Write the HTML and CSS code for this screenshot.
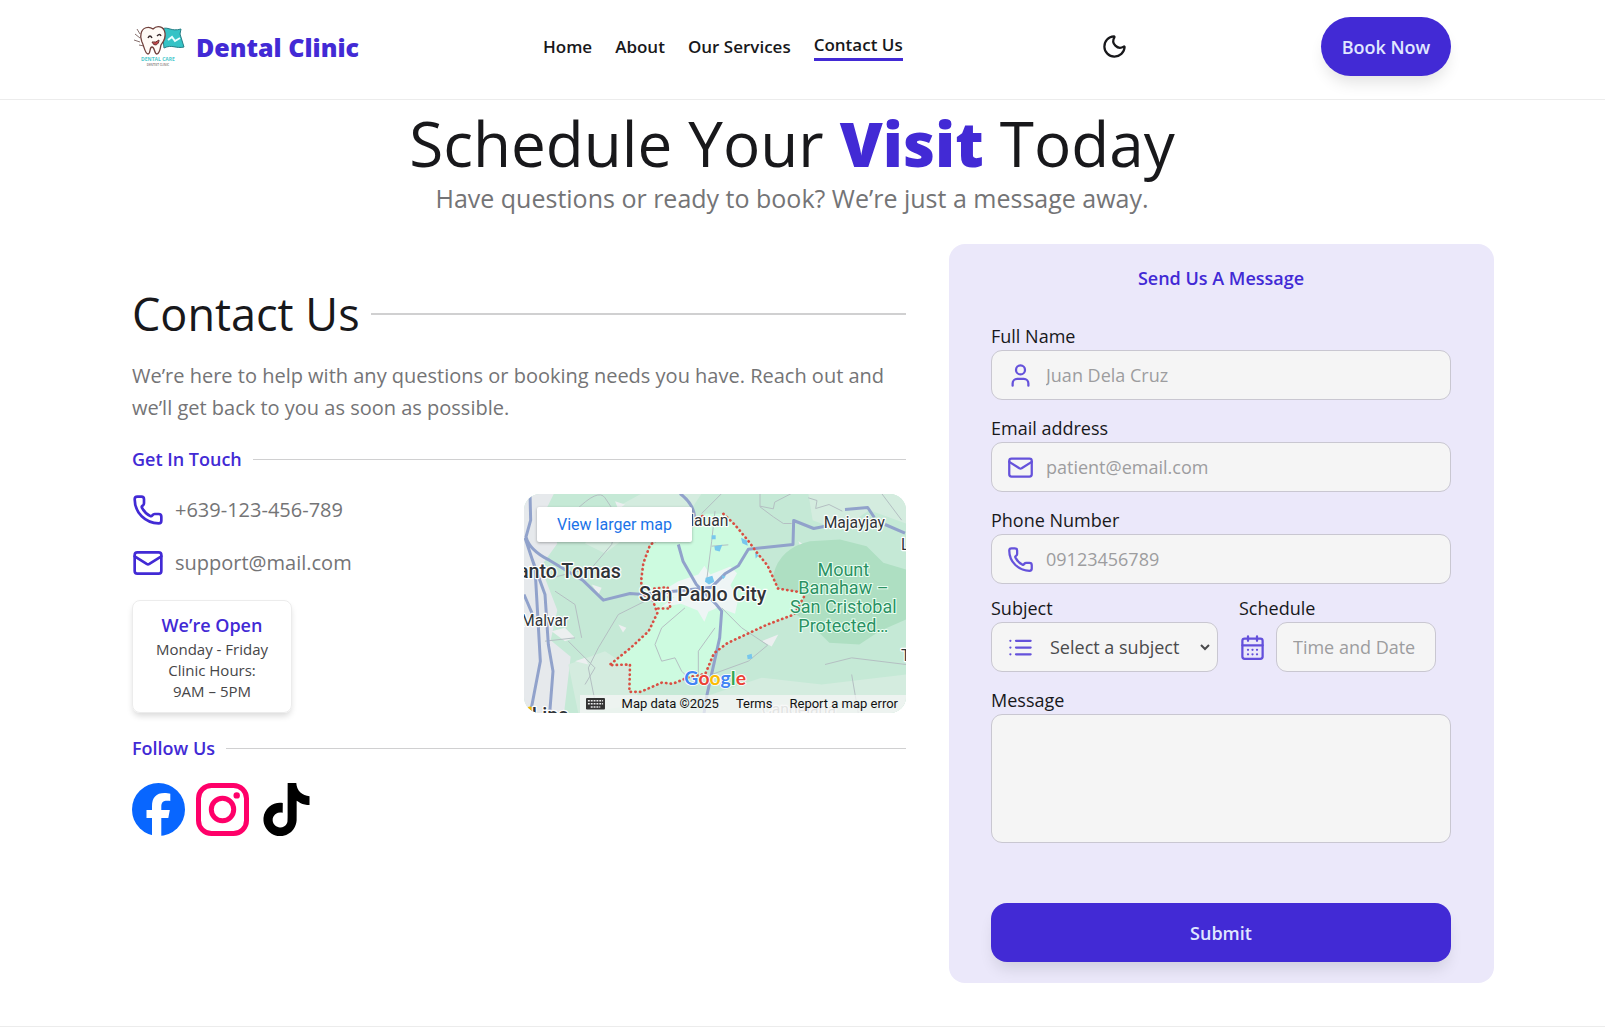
FILE: index.html
```html
<!DOCTYPE html>
<html lang="en">
<head>
<meta charset="utf-8">
<meta name="viewport" content="width=device-width, initial-scale=1">
<title>Dental Clinic – Contact Us</title>
<link rel="stylesheet" href="styles.css">
</head>
<body>
<svg class="sprite" aria-hidden="true">
  <symbol id="phone" viewBox="0 0 24 24"><path d="M13.832 16.568a1 1 0 0 0 1.213-.303l.355-.465A2 2 0 0 1 17 15h3a2 2 0 0 1 2 2v3a2 2 0 0 1-2 2A18 18 0 0 1 2 4a2 2 0 0 1 2-2h3a2 2 0 0 1 2 2v3a2 2 0 0 1-.8 1.600l-.468.351a1 1 0 0 0-.292 1.233 14 14 0 0 0 6.392 6.384"/></symbol>
  <symbol id="mail" viewBox="0 0 24 24"><rect x="2" y="4" width="20" height="16" rx="2"/><path d="m22 7-8.991 5.727a2 2 0 0 1-2.009 0L2 7"/></symbol>
  <symbol id="user" viewBox="0 0 24 24"><path d="M19 21v-2a4 4 0 0 0-4-4H9a4 4 0 0 0-4 4v2"/><circle cx="12" cy="7" r="4"/></symbol>
  <symbol id="list" viewBox="0 0 24 24"><path d="M8 6h13M8 12h13M8 18h13M3 6h.01M3 12h.01M3 18h.01"/></symbol>
  <symbol id="calendar" viewBox="0 0 24 24"><rect x="3" y="4" width="18" height="18" rx="2"/><path d="M8 2v4M16 2v4M3 10h18M8 14h.01M12 14h.01M16 14h.01M8 18h.01M12 18h.01M16 18h.01"/></symbol>
</svg>

<header class="header">
  <a class="brand" href="#">
    <svg class="brand-logo" viewBox="0 0 54 44" aria-hidden="true">
      <path d="M30 4c6-3 9 3 19 0l-1 5 4 13c-8 2-12-3-20 1z" fill="#35c3c6" stroke="#267f86"/>
      <path d="m36 15 4-3 3 4 5-3" fill="none" stroke="#e9ffff" stroke-width="2"/>
      <path d="m5 4 3 5M3 9l5 4M2 15l6 2M7 20l5 1" fill="none" stroke="#86706d"/>
      <path d="M9 9c1-7 8-8 12-5 4-4 11-3 12 4 1 6-2 9-4 12-1 4-1 8-4 9-3 0-2-7-5-7s-1 7-4 7-4-8-6-12c-1-3-2-5-1-8z" fill="#fffaf6" stroke="#71413c" stroke-width="1.300"/>
      <path d="M16 13q2-4 4 0M25 11q3-3 4 0" fill="none" stroke="#38292b" stroke-width="1.400"/>
      <path d="M20 17q4 1 7-2c0 5-5 7-7 2z" fill="#c54548" stroke="#65302f"/>
      <text class="logo-title" x="26" y="36">DENTAL CARE</text>
      <text class="logo-note" x="26" y="41">DENTIST CLINIC</text>
    </svg>
    <span>Dental Clinic</span>
  </a>
  <nav class="nav" aria-label="Main">
    <a href="#">Home</a>
    <a href="#">About</a>
    <a href="#">Our Services</a>
    <a class="active" href="#" aria-current="page">Contact Us</a>
  </nav>
  <button class="theme" type="button" aria-label="Dark mode">
    <svg viewBox="0 0 24 24" aria-hidden="true"><path d="M20.985 12.486a9 9 0 1 1-9.473-9.472c.405-.022.617.46.402.803a6 6 0 0 0 8.268 8.268c.344-.215.825-.004.803.401"/></svg>
  </button>
  <button class="book" type="button">Book Now</button>
</header>

<main>
  <section class="hero">
    <h1>Schedule Your <strong>Visit</strong> Today</h1>
    <p>Have questions or ready to book? We’re just a message away.</p>
  </section>

  <div class="columns">
    <section class="contact">
      <h2 class="ruled ruled-large"><span>Contact Us</span></h2>
      <p class="intro">We’re here to help with any questions or booking needs you have. Reach out and we’ll get back to you as soon as possible.</p>
      <h3 class="ruled"><span>Get In Touch</span></h3>
      <div class="touch">
        <div class="details">
          <a class="detail" href="tel:+639123456789"><svg class="icon" aria-hidden="true"><use href="#phone"/></svg>+639-123-456-789</a>
          <a class="detail" href="mailto:support@mail.com"><svg class="icon" aria-hidden="true"><use href="#mail"/></svg>support@mail.com</a>
          <div class="hours">
            <h4>We’re Open</h4>
            <p>Monday - Friday<br>Clinic Hours:<br>9AM – 5PM</p>
          </div>
        </div>
        <div class="map">
          <svg class="map-art" viewBox="27 27 1146 660" preserveAspectRatio="xMidYMid slice" role="img" aria-label="Map of San Pablo City">
            <rect x="27" y="27" width="1146" height="660" fill="#c5e9d6"/>
            <path d="M27 27h90l-30 60 40 90-50 70 50 130-20 90 60 50-20 170H27z" fill="#e6e9ec"/>
            <path d="M380 27h180l-40 60-160 50-90 70-60-30 60-90zM880 27h293v90l-110-40-90 60-80-30zM560 640l180-60 180 20 253-30v117H560zM160 540l110-40 90 60 10 100-180 27z" fill="#d4ecdf"/>
            <path d="m300 50 30 10-20 14zm100 150 20-10 8 16-24 6zm-290 240 40-10 30 30-30 10zm120-140 30 10-10 20zm80 120 24 10-10 14zm430 50 50-20-20 36zm-560 60 30-10 10 20zm500 120 20-12 8 20zm170-480 26 16-16 10z" fill="#eceff0"/>
            <path d="M775 270q20-80 110-100l90-5 80 20 50 50 68 20v150l-80 35-60 40-90-5-60-60-80-50-30-50z" fill="#aedfc2"/>
            <path d="m625 88 34 32 40 48 28 38 30 36 32 70 84 14-36 64-80 30-120 56-40 30-26 62-50 10-48 20-32-4-64 28h-34l2-82-62 2 64-52 54-50 26-54-14-40-34-20v-42l6-48 20-54 56-44 34 20 40-46 38-24z" fill="#cdfbe0"/>
            <path d="m490 290 60-20 18-26 18 26 60-24 20 20-20 36 24 40-10 46-50-20-30 14-12 30-20-34-50-20-60 10 40-30-50-10z" fill="#eef5f5"/>
            <g fill="none" stroke="#b4bfc2" stroke-width="3">
              <path d="M180 80q70-70 90-40l40 60-20 80-60 70-120 30M390 350l-80 40-60 100-30 60 20 100M735 27v40l40 30 30 20 25 0M735 65l40 8 4-20 50-26M880 40l26 8-4 24 40-12 40 20M620 27l-60 60M600 80l-10 90-14 110M590 185l50-4M510 370l-70 60-20 50 20 50 40-10 20 40 20 20M600 430l-50 70v80M620 370l60 60 78 52-58 48-110 40M930 540l80-20 163 20M1010 570l20 117M1100 27l60 80M180 460l-90 10M120 320l60 40 20 100M160 470l80 80-30 50"/>
            </g>
            <g fill="none" stroke="#91a2cb" stroke-width="9" stroke-linejoin="round">
              <path d="m45 27 2 80-14 50q10 40 70 70l100 60 62 60 80-20 50 4M30 160l30 90 16 280-30 157M50 220l40 110 10 150 14 80-10 127M27 330l30 70M495 27q40 30 44 70M490 180l14 50 40 70 60 60 16 20-6 80-40 180-10 67M400 328l100-10 90-10 40-40 40-24 30-50 134-14 2-72 60 24 50-10M1110 120l60 26M990 75l68-6 20 30"/>
            </g>
            <path d="m598 185 24-4-8 20-14-4zm80-25 18 8 2 16-16-8zM572 280l20-6 6 18-16 8-12-8zm48-8 12 4-8 8zm76 240 14-4 2 14-14 2zM590 152h12v12h-12zm130 50 10 12-8 8z" fill="#77c7ed"/>
            <path d="m625 88 34 32 40 48 28 38 30 36 32 70 84 14-36 64-80 30-120 56-40 30-26 62-50 10-48 20-32-4-64 28h-34l2-82-62 2 64-52 54-50 26-54-14-40-34-20v-42l6-48 20-54 56-44 34 20 40-46 38-24M418 312l40-4 8 64-46 0" fill="none" stroke="#d94f43" stroke-width="8" stroke-linecap="round" stroke-dasharray="1 13"/>
            <circle cx="45" cy="682" r="16" fill="#edb900"/>
            <g class="place">
              <text x="640" y="124" text-anchor="end">lauan</text>
              <text x="926" y="131">Majayjay</text>
              <text x="1158" y="195">Luisiana</text>
              <text x="1158" y="528">Tayabas</text>
              <text x="160" y="424" text-anchor="end">Malvar</text>
              <text x="318" y="280" text-anchor="end" class="strong">Santo Tomas</text>
              <text x="372" y="350" class="strong">San Pablo City</text>
              <text x="50" y="712" class="strong">Lipa</text>
              <text x="740" y="691" class="faint">Candelaria</text>
            </g>
            <g class="park" text-anchor="middle">
              <text x="985" y="273">Mount</text><text x="985" y="329">Banahaw –</text><text x="985" y="385">San Cristobal</text><text x="985" y="441">Protected…</text>
            </g>
            <text class="google" x="508" y="600"><tspan fill="#4285f4">G</tspan><tspan fill="#ea4335">o</tspan><tspan fill="#fbbc04">o</tspan><tspan fill="#4285f4">g</tspan><tspan fill="#34a853">l</tspan><tspan fill="#ea4335">e</tspan></text>
          </svg>
          <a class="map-larger" href="#">View larger map</a>
          <div class="map-bar">
            <button type="button" aria-label="Keyboard shortcuts"><svg viewBox="0 0 20 12" aria-hidden="true"><rect width="20" height="12" rx="1" fill="#333"/><path d="M2 3h16M2 6h16M5 9.500h10" stroke="#eee" stroke-width="1.600" stroke-dasharray="2 1"/></svg></button>
            <span>Map data ©2025</span>
            <a href="#">Terms</a>
            <a href="#">Report a map error</a>
          </div>
        </div>
      </div>
      <h3 class="ruled"><span>Follow Us</span></h3>
      <div class="social">
        <a href="#" aria-label="Facebook"><svg viewBox="0 0 53 53" aria-hidden="true"><circle cx="26.500" cy="26.500" r="26.500" fill="#0866ff"/><path d="M20 53V35h-5.500v-8H20v-3.500C20 14.500 24 10 32.500 10c1.700 0 4.600.3 5.800.7v7.200c-.6-.1-1.700-.1-3-.1-4.300 0-6 1.600-6 5.900V27h8.500l-1.500 8h-7v18z" fill="#fff"/></svg></a>
        <a href="#" aria-label="Instagram"><svg viewBox="0 0 53 53" fill="none" stroke="#ff0069" aria-hidden="true"><rect x="2.500" y="2.500" width="48" height="48" rx="13" stroke-width="5"/><circle cx="26.500" cy="26.500" r="11.200" stroke-width="5"/><circle cx="40.700" cy="12.400" r="3.200" fill="#ff0069" stroke="none"/></svg></a>
        <a href="#" aria-label="TikTok"><svg viewBox="0 0 24 24" aria-hidden="true"><path d="M12.525.020c1.310-.020 2.610-.010 3.910-.020.080 1.530.630 3.090 1.750 4.170 1.120 1.110 2.700 1.620 4.240 1.790v4.030c-1.440-.050-2.890-.350-4.200-.970-.570-.260-1.100-.590-1.620-.930-.010 2.920.010 5.840-.020 8.750-.080 1.400-.540 2.790-1.350 3.940-1.310 1.920-3.580 3.170-5.910 3.210-1.430.080-2.860-.310-4.080-1.030-2.020-1.190-3.440-3.370-3.650-5.710-.020-.500-.030-1-.010-1.490.180-1.900 1.120-3.720 2.580-4.960 1.660-1.440 3.980-2.130 6.150-1.720.020 1.480-.040 2.960-.040 4.440-.990-.320-2.150-.230-3.020.370-.630.410-1.110 1.040-1.360 1.750-.210.510-.150 1.070-.140 1.610.240 1.640 1.820 3.020 3.500 2.870 1.120-.010 2.190-.660 2.770-1.610.190-.330.400-.670.410-1.060.100-1.790.060-3.570.070-5.360.010-4.030-.010-8.050.020-12.070z"/></svg></a>
      </div>
    </section>

    <form class="form">
      <h3>Send Us A Message</h3>
      <div class="field first">
        <label for="name">Full Name</label>
        <div class="box"><svg class="icon" aria-hidden="true"><use href="#user"/></svg><input id="name" type="text" placeholder="Juan Dela Cruz"></div>
      </div>
      <div class="field">
        <label for="email">Email address</label>
        <div class="box"><svg class="icon" aria-hidden="true"><use href="#mail"/></svg><input id="email" type="email" placeholder="patient@email.com"></div>
      </div>
      <div class="field">
        <label for="tel">Phone Number</label>
        <div class="box"><svg class="icon" aria-hidden="true"><use href="#phone"/></svg><input id="tel" type="tel" placeholder="09123456789"></div>
      </div>
      <div class="pair">
        <div class="subject">
          <label for="subject">Subject</label>
          <div class="box"><svg class="icon" aria-hidden="true"><use href="#list"/></svg><select id="subject"><option>Select a subject</option><option>Appointment</option></select></div>
        </div>
        <div class="schedule">
          <label for="date">Schedule</label>
          <div class="date-row"><svg class="icon" aria-hidden="true"><use href="#calendar"/></svg><input class="box" id="date" type="text" placeholder="Time and Date"></div>
        </div>
      </div>
      <div class="field">
        <label for="message">Message</label>
        <textarea class="box" id="message"></textarea>
      </div>
      <button class="submit" type="submit">Submit</button>
    </form>
  </div>
</main>
<footer class="footer"></footer>
</body>
</html>
```
FILE: styles.css
```css
:root {
  --primary: #422ad5;
  --on-primary: #e0e7ff;
  --ink: #18181b;
  --muted: #747476;
  --line: #d0d0d1;
}

* { box-sizing: border-box; }

body {
  margin: 0;
  background: #fff;
  color: var(--ink);
  font: 18px/28px "Open Sans", "Noto Sans", sans-serif;
}

h1, h2, h3, h4, p { margin: 0; font-weight: 400; }
h3, h4 { color: var(--primary); font-size: 18px; font-weight: 600; }
a { color: inherit; text-decoration: none; }
button, input, select, textarea { font: inherit; color: inherit; }
button { border: 0; background: none; padding: 0; cursor: pointer; }
label { display: block; }

.sprite { position: absolute; width: 0; height: 0; }

.icon {
  flex: none;
  width: 32px;
  height: 32px;
  fill: none;
  stroke: var(--primary);
  stroke-width: 2;
  stroke-linecap: round;
  stroke-linejoin: round;
}

/* Header */
.header {
  display: grid;
  grid-template-columns: 411fr 558fr 220fr auto;
  align-items: center;
  padding: 17px 154px 23px 132px;
  border-bottom: 1px solid #ececec;
}

.brand {
  display: flex;
  align-items: center;
  gap: 10px;
  color: var(--primary);
  font-size: 25px;
  font-weight: 800;
}
.brand-logo { width: 54px; height: 44px; }
.logo-title { font-size: 5px; font-weight: 700; fill: #4cc9cd; text-anchor: middle; }
.logo-note { font-size: 3px; font-weight: 600; fill: #77706f; text-anchor: middle; }

.nav { display: flex; align-items: center; gap: 23px; font-size: 17px; font-weight: 600; }
.nav .active { line-height: 26px; border-bottom: 3px solid var(--primary); }

.theme { width: 27px; height: 27px; }
.theme svg { display: block; fill: none; stroke: var(--ink); stroke-width: 2; stroke-linecap: round; stroke-linejoin: round; }

.book, .submit {
  height: 59px;
  background: var(--primary);
  color: var(--on-primary);
  font-weight: 600;
  box-shadow: 0 10px 16px -4px rgb(0 0 0 / 12%);
}
.book { min-width: 130px; padding: 0 20px; border-radius: 30px; }

/* Hero */
.hero { padding: 10px 21px 23px 0; text-align: center; }
.hero h1 { font-size: 62px; line-height: 66px; }
.hero strong { color: var(--primary); font-weight: 800; }
.hero p { color: var(--muted); font-size: 25px; line-height: 45px; }

.columns {
  display: grid;
  grid-template-columns: minmax(0, 774fr) minmax(0, 545fr);
  gap: 43px;
  padding: 0 111px 43px 132px;
}

/* Contact column */
.contact {
  display: flex;
  flex-direction: column;
  gap: 21px;
  padding-top: 45px;
}

.ruled { display: flex; align-items: center; gap: 11px; }
.ruled::after { content: ""; flex: 1; height: 1px; background: var(--line); }
.ruled-large { font-size: 45px; line-height: 50px; }
.ruled-large::after { height: 2px; }

.intro { color: var(--muted); font-size: 20px; line-height: 32px; }

.touch { display: grid; grid-template-columns: 1fr 1fr; gap: 10px; }
.details { display: flex; flex-direction: column; align-items: flex-start; gap: 21px; }
.detail {
  display: flex;
  align-items: center;
  gap: 11px;
  color: var(--muted);
  font-size: 20px;
  line-height: 32px;
}

.hours {
  width: 160px;
  padding: 10px;
  border: 1px solid #ececec;
  border-radius: 8px;
  box-shadow: 0 4px 6px -1px rgb(0 0 0 / 15%);
  color: #464648;
  font-size: 15px;
  line-height: 21px;
  text-align: center;
}
.hours h4 { line-height: 28px; }

/* Map */
.map {
  position: relative;
  height: 219px;
  border-radius: 16px;
  overflow: hidden;
  font-family: Roboto, sans-serif;
}
.map-art { display: block; width: 100%; height: 100%; }
.map-art text { font-family: Roboto, sans-serif; }
.place text { font-size: 47px; fill: #303438; stroke: #fff; stroke-width: 7; paint-order: stroke; stroke-linejoin: round; }
.place .strong { font-size: 59px; font-weight: 500; }
.place .faint { fill: #a4aca8; }
.park text { font-size: 54px; fill: #2b9163; stroke: #e8fff1; stroke-width: 6; paint-order: stroke; }
.map-art .google { font-family: Lato, sans-serif; font-size: 58px; font-weight: 700; stroke: #fff; stroke-width: 5; paint-order: stroke; }

.map-larger {
  position: absolute;
  top: 13px;
  left: 13px;
  padding: 0 20px;
  background: #fff;
  border-radius: 2px;
  box-shadow: 0 1px 3px rgb(0 0 0 / 30%);
  color: #1a73e8;
  font-size: 16px;
  line-height: 35px;
}

.map-bar {
  position: absolute;
  right: 0;
  bottom: 0;
  display: flex;
  align-items: center;
  gap: 17px;
  padding: 0 8px 0 6px;
  background: rgb(245 245 245 / 75%);
  color: #111;
  font-size: 13px;
  line-height: 18px;
  white-space: nowrap;
}
.map-bar button { width: 19px; height: 12px; }
.map-bar svg { display: block; }

/* Social links */
.social { display: flex; gap: 11px; }
.social a, .social svg { display: block; width: 53px; height: 53px; }

/* Message form */
.form {
  padding: 20px 43px 21px 42px;
  border-radius: 16px;
  background: #ebe8fa;
}
.form h3 { text-align: center; }
.field { margin-top: 14px; }
.field.first { margin-top: 30px; }

.box {
  height: 50px;
  border: 1px solid #c9c7d1;
  border-radius: 11px;
  background: #f5f5f5;
}
div.box { display: flex; align-items: center; gap: 12px; padding: 0 4px 0 15px; }
.form .icon { width: 27px; height: 27px; opacity: .8; }
.box input, .box select {
  flex: 1;
  min-width: 0;
  border: 0;
  padding: 0;
  background: transparent;
  outline: 0;
}
.box select { color: #4a4a4c; }
::placeholder { color: #9d9d9f; opacity: 1; }

.pair { display: flex; gap: 21px; margin-top: 10px; }
.subject { width: 227px; }
.date-row { display: flex; align-items: center; gap: 10px; }
.date-row .box { width: 160px; padding: 0 16px; }

textarea.box { display: block; width: 100%; height: 129px; padding: 10px 16px; resize: none; }
.submit { display: block; width: 100%; margin-top: 60px; border-radius: 16px; }

.footer { border-top: 1px solid #ececec; }
```
